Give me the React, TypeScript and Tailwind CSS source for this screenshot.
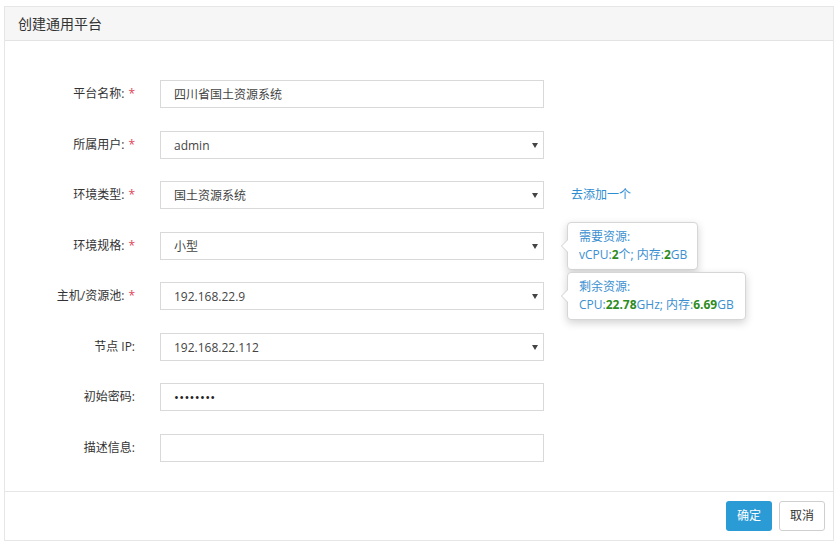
import React from 'react';

// 创建通用平台 表单

type Row = {
  label: string;
  required?: boolean;
  kind: 'input' | 'select' | 'password';
  value: string;
};

const rows: Row[] = [
  { label: '平台名称:', required: true, kind: 'input', value: '四川省国土资源系统' },
  { label: '所属用户:', required: true, kind: 'select', value: 'admin' },
  { label: '环境类型:', required: true, kind: 'select', value: '国土资源系统' },
  { label: '环境规格:', required: true, kind: 'select', value: '小型' },
  { label: '主机/资源池:', required: true, kind: 'select', value: '192.168.22.9' },
  { label: '节点 IP:', kind: 'select', value: '192.168.22.112' },
  { label: '初始密码:', kind: 'password', value: '••••••••' },
  { label: '描述信息:', kind: 'input', value: '' },
];

function Popover({ children, width }: { children: React.ReactNode; width: string }) {
  return (
    <div
      className={`absolute left-[23px] top-1/2 -translate-y-1/2 ${width} bg-white border border-[#d6d6d6] rounded-[4px] shadow-[0_3px_8px_rgba(0,0,0,0.18)] px-[11px] py-[5px] text-[12px] leading-[18px] text-[#3b8fd0] z-10`}
    >
      <span className="absolute -left-[7px] top-1/2 -translate-y-1/2 w-0 h-0 border-y-[7px] border-y-transparent border-r-[7px] border-r-[#d0d0d0]" />
      <span className="absolute -left-[6px] top-1/2 -translate-y-1/2 w-0 h-0 border-y-[6px] border-y-transparent border-r-[6px] border-r-white" />
      {children}
    </div>
  );
}

function Extra({ index }: { index: number }) {
  if (index === 2) {
    return (
      <a href="#" className="ml-[27px] text-[12px] text-[#2e8dd0] whitespace-nowrap">
        去添加一个
      </a>
    );
  }
  if (index === 3) {
    return (
      <div className="relative self-stretch">
        <Popover width="w-[131px]">
          <div>需要资源:</div>
          <div className="whitespace-nowrap">
            vCPU:<b className="text-[#2e8b1e]">2</b>个; 内存:<b className="text-[#2e8b1e]">2</b>GB
          </div>
        </Popover>
      </div>
    );
  }
  if (index === 4) {
    return (
      <div className="relative self-stretch">
        <Popover width="w-[179px]">
          <div>剩余资源:</div>
          <div className="whitespace-nowrap">
            CPU:<b className="text-[#2e8b1e]">22.78</b>GHz; 内存:<b className="text-[#2e8b1e]">6.69</b>GB
          </div>
        </Popover>
      </div>
    );
  }
  return null;
}

function Field({ row }: { row: Row }) {
  return (
    <div className="w-[384px] h-[28px] border border-[#d9d9d9] bg-white flex items-center pl-[13px] pr-[5px] pt-[2px] text-[12px] text-[#444]">
      <span
        className={`flex-1 ${row.kind === 'password' ? 'text-[13px] tracking-[0.3px] text-[#222]' : ''}`}
      >
        {row.value}
      </span>
      {row.kind === 'select' && (
        <svg width="6" height="5" viewBox="0 0 6 5" className="-mt-[1px]">
          <path d="M0 0h6L3 5z" fill="#444" />
        </svg>
      )}
    </div>
  );
}

export default function App() {
  return (
    <div
      className="w-[840px] h-[543px] bg-white pt-[6px] pl-[4px] pr-[6px] pb-[2px]"
      style={{ fontFamily: '"Open Sans", "Noto Sans CJK SC", sans-serif' }}
    >
      <div className="h-full border border-[#e6e6e6] flex flex-col">
        <div className="h-[34px] bg-[#f6f6f6] border-b border-[#e3e3e3] flex items-center pl-[13px] text-[14px] text-[#333]">
          创建通用平台
        </div>
        <div className="flex-1 pt-[39px] flex flex-col gap-[22.5px]">
          {rows.map((row, i) => (
            <div key={row.label} className="flex items-center">
              <label className="w-[130px] text-right text-[12px] text-[#333] whitespace-nowrap">
                {row.label}
                {row.required && <span className="text-[#e0445a] ml-[4px]">*</span>}
              </label>
              <div className="w-[25px]" />
              <Field row={row} />
              <Extra index={i} />
            </div>
          ))}
        </div>
        <div className="h-[49px] border-t border-[#e6e6e6] flex items-center justify-end gap-[7px] pr-[8px]">
          <button className="w-[46px] h-[30px] rounded-[3px] bg-[#2a9bd5] text-white text-[12px]">确定</button>
          <button className="w-[46px] h-[30px] rounded-[3px] bg-white border border-[#cfcfcf] text-[#333] text-[12px]">取消</button>
        </div>
      </div>
    </div>
  );
}
